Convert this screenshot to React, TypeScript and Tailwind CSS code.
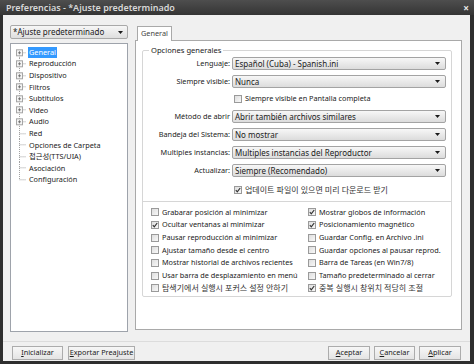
import React from "react";

const FONT = "font-['Noto_Sans','Noto_Sans_CJK_KR',sans-serif]";

function Arrow() {
  return (
    <svg width="5" height="3" viewBox="0 0 5 3" className="shrink-0">
      <path d="M0 0h5L2.5 3z" fill="#1a1a1a" />
    </svg>
  );
}

function Combo({ value }: { value: string }) {
  return (
    <div className="flex h-[13px] w-[214px] items-center justify-between rounded-[2px] border border-[#a3a3a3] bg-gradient-to-b from-[#f7f7f7] to-[#dcdcdc] pl-[2px] pr-[5px] text-[8px] leading-none">
      <span>{value}</span>
      <Arrow />
    </div>
  );
}

function Check({ checked }: { checked?: boolean }) {
  return (
    <span className="flex h-[8px] w-[8px] shrink-0 items-center justify-center border border-[#9a9a9a] bg-gradient-to-br from-[#dedede] to-[#f8f8f8]">
      {checked && (
        <svg width="6" height="6" viewBox="0 0 6 6">
          <path d="M0.8 3.2L2.3 4.8L5.2 1" stroke="#333" strokeWidth="1.2" fill="none" />
        </svg>
      )}
    </span>
  );
}

function CheckRow({ label, checked, ko }: { label: string; checked?: boolean; ko?: boolean }) {
  return (
    <div className="flex h-[12.7px] items-center gap-[3px] leading-none">
      <Check checked={checked} />
      <span className={`whitespace-nowrap ${ko ? "text-[8px] text-[#333]" : ""}`}>{label}</span>
    </div>
  );
}

function FormRow({ label, value }: { label: string; value: string }) {
  return (
    <div className="flex h-[13px] items-center">
      <span className="w-[89px] pr-[2px] text-right leading-none">{label}</span>
      <Combo value={value} />
    </div>
  );
}

const tree: { label: string; expand?: boolean; selected?: boolean }[] = [
  { label: "General", expand: true, selected: true },
  { label: "Reproducción", expand: true },
  { label: "Dispositivo", expand: true },
  { label: "Filtros", expand: true },
  { label: "Subtitulos", expand: true },
  { label: "Video", expand: true },
  { label: "Audio", expand: true },
  { label: "Red" },
  { label: "Opciones de Carpeta" },
  { label: "접근성(TTS/UIA)" },
  { label: "Asociación" },
  { label: "Configuración" },
];

function TreeGlyph({ expand, first, last }: { expand?: boolean; first?: boolean; last?: boolean }) {
  return (
    <svg width="11" height="11.6" viewBox="0 0 11 11.6" className="shrink-0">
      <line
        x1="3.5"
        y1={first ? 5.8 : 0}
        x2="3.5"
        y2={last ? 5.8 : 11.6}
        stroke="#a0a0a0"
        strokeWidth="1"
        strokeDasharray="1 1"
      />
      <line x1="3.5" y1="5.8" x2="10" y2="5.8" stroke="#a0a0a0" strokeWidth="1" strokeDasharray="1 1" />
      {expand && (
        <g>
          <rect x="0.5" y="2.8" width="6" height="6" fill="#f4f4f4" stroke="#a5a5a5" />
          <path d="M2 5.8h3M3.5 4.3v3" stroke="#666" strokeWidth="0.8" />
        </g>
      )}
    </svg>
  );
}

function Btn({ label, w }: { label: string; w: string }) {
  return (
    <div
      className={`flex h-[14px] items-center justify-center whitespace-nowrap border border-[#acacac] bg-gradient-to-b from-[#f7f7f7] to-[#e4e4e4] leading-none ${w}`}
    >
      <span>
        <span className="underline">{label[0]}</span>
        {label.slice(1)}
      </span>
    </div>
  );
}

export default function App() {
  return (
    <div className={`flex h-[364px] w-[474px] flex-col bg-[#2e2e2e] text-[7.3px] text-[#1b1b1b] ${FONT}`}>
      {/* title bar */}
      <div className="flex h-[15px] items-center justify-between bg-gradient-to-b from-[#4e4e4e] to-[#353535] pl-[6px] pr-[5px]">
        <span className="text-[9px] font-semibold leading-none text-[#d8d8d8]">Preferencias - *Ajuste predeterminado</span>
        <span className="text-[10px] font-bold leading-none text-[#e8e8e8]">×</span>
      </div>

      <div className="ml-[3px] mr-[4px] flex h-[346px] flex-col bg-[#f0f0f0]">
        <div className="flex gap-[7px] pl-[7px] pt-[10px]">
          {/* left column */}
          <div className="flex w-[118px] flex-col gap-[4px]">
            <div className="flex h-[14px] items-center justify-between rounded-[2px] border border-[#a9a9a9] bg-gradient-to-b from-[#f7f7f7] to-[#dedede] pl-[2px] pr-[4px] text-[8px] leading-none">
              <span>*Ajuste predeterminado</span>
              <Arrow />
            </div>
            <div className="h-[289px] border border-[#9ea3ab] bg-white pl-[5px] pt-[2.5px]">
              {tree.map((t, i) => (
                <div key={t.label} className="flex h-[11.6px] items-center">
                  <TreeGlyph expand={t.expand} first={i === 0} last={i === tree.length - 1} />
                  <span
                    className={`ml-[1px] px-[1px] leading-[11px] whitespace-nowrap ${
                      t.selected ? "bg-[#3399ff] text-white" : ""
                    }`}
                  >
                    {t.label}
                  </span>
                </div>
              ))}
            </div>
          </div>

          {/* right column */}
          <div className="flex w-[327px] flex-col">
            <div className="flex h-[15px] items-end pl-[2px]">
              <div className="relative z-10 -mb-px flex h-[15px] items-center border border-b-0 border-[#a9a9a9] bg-white px-[3px] leading-none text-[#444]">
                General
              </div>
            </div>
            <div className="h-[290px] border border-[#a9a9a9] bg-white pl-[6px] pr-[9px] pt-[4px]">
              <fieldset className="rounded-[2px] border border-[#d6d6d6]">
                <legend className="ml-[6px] px-[2px] text-[7.6px] leading-[11px]">Opciones generales</legend>
                <div className="flex flex-col gap-[5px] pt-[1px]">
                  <FormRow label="Lenguaje:" value="Español (Cuba) - Spanish.ini" />
                  <FormRow label="Siempre visible:" value="Nunca" />
                  <div className="flex h-[12px] items-center gap-[3px] pl-[91px] leading-none">
                    <Check />
                    <span>Siempre visible en Pantalla completa</span>
                  </div>
                  <FormRow label="Método de abrir" value="Abrir también archivos similares" />
                  <FormRow label="Bandeja del Sistema:" value="No mostrar" />
                  <FormRow label="Multiples instancias:" value="Multiples instancias del Reproductor" />
                  <FormRow label="Actualizar:" value="Siempre (Recomendado)" />
                </div>
                <div className="mt-[7px] flex h-[12px] items-center gap-[3px] pl-[91px] leading-none">
                  <Check checked />
                  <span className="text-[8px] text-[#333]">업데이트 파일이 있으면 미리 다운로드 받기</span>
                </div>
                <div className="mt-[5px] h-px bg-[#d6d6d6]" />
                <div className="flex pb-[1px] pl-[8px] pt-[4px]">
                  <div className="flex w-[157px] flex-col">
                    <CheckRow label="Grabarar posición al minimizar" />
                    <CheckRow label="Ocultar ventanas al minimizar" checked />
                    <CheckRow label="Pausar reproducción al minimizar" />
                    <CheckRow label="Ajustar tamaño desde el centro" />
                    <CheckRow label="Mostrar historial de archivos recientes" />
                    <CheckRow label="Usar barra de desplazamiento en menú" />
                    <CheckRow label="탐색기에서 실행시 포커스 설정 안하기" ko />
                  </div>
                  <div className="flex flex-col">
                    <CheckRow label="Mostrar globos de información" checked />
                    <CheckRow label="Posicionamiento magnético" checked />
                    <CheckRow label="Guardar Config. en Archivo .ini" />
                    <CheckRow label="Guardar opciones al pausar reprod." />
                    <CheckRow label="Barra de Tareas (en Win7/8)" />
                    <CheckRow label="Tamaño predeterminado al cerrar" />
                    <CheckRow label="중복 실행시 창위치 적당히 조절" checked ko />
                  </div>
                </div>
              </fieldset>
            </div>
          </div>
        </div>

        <div className="mt-[9px] h-px bg-[#dcdcdc]" />
        <div className="flex items-center justify-between pl-[9px] pr-[9px] pt-[4px]">
          <div className="flex gap-[5px]">
            <Btn label="Inicializar" w="w-[51px]" />
            <Btn label="Exportar Preajuste" w="w-[67px]" />
          </div>
          <div className="flex gap-[4px]">
            <Btn label="Aceptar" w="w-[42px]" />
            <Btn label="Cancelar" w="w-[41px]" />
            <Btn label="Aplicar" w="w-[42px]" />
          </div>
        </div>
      </div>
    </div>
  );
}
